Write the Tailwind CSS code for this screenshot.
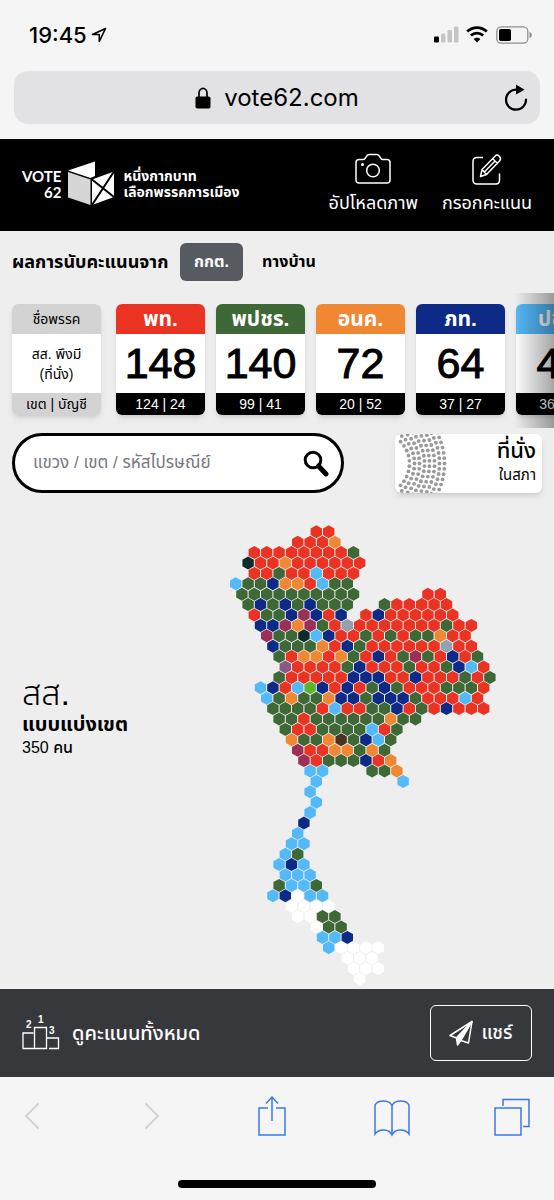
<!DOCTYPE html>
<html lang="th">

<head>
  <meta charset="UTF-8" />
  <meta name="viewport" content="width=device-width, initial-scale=1.0" />
  <title>Vote62</title>
  <script src="https://cdn.jsdelivr.net/npm/@tailwindcss/browser@4"></script>
</head>

<body class="min-h-screen flex flex-col bg-[#eeeeee] text-black overflow-x-hidden font-['Liberation_Sans','Noto_Sans_Thai',sans-serif]">

  <!-- Browser top -->
  <div class="bg-[#f5f5f5] pb-[15px] font-[Inter,sans-serif]">
    <div class="flex items-center justify-between h-[69px] pl-[29px] pr-[22px]">
      <div class="flex items-center gap-1">
        <span class="text-[22px] leading-7 font-medium">19:45</span>
        <svg class="w-4 h-4" viewBox="0 0 16 16" fill="none" stroke="#000" stroke-width="1.6" stroke-linejoin="round"><path d="M14.5 1.5 1.5 7.5H8.3V14.5Z" /></svg>
      </div>
      <div class="flex items-center gap-2">
        <svg class="w-[26px] h-[17px]" viewBox="0 0 26 17">
          <rect x="0" y="10.500" width="5" height="6" rx="1.200" />
          <rect x="7" y="7.500" width="4.500" height="9" rx="1.200" fill="#c5c5c5" />
          <rect x="13.500" y="4" width="4.500" height="12.500" rx="1.200" fill="#c5c5c5" />
          <rect x="20" y="0.500" width="4.500" height="16" rx="1.200" fill="#c5c5c5" />
        </svg>
        <svg class="w-[22px] h-[17px] -ml-[2px]" viewBox="0 0 22 17" fill="none" stroke="#000" stroke-width="2.800">
          <path d="M1.200 5.600C6.800.2 15.200.2 20.800 5.600M4.900 9.500c3.400-3.300 8.800-3.300 12.200 0" />
          <path d="M11 16.500 7.600 13c1.900-1.800 4.900-1.800 6.800 0Z" fill="#000" stroke="none" />
        </svg>
        <svg class="w-9 h-[18px]" viewBox="0 0 36 18">
          <rect x="0.800" y="0.800" width="31" height="16.400" rx="4.500" fill="none" stroke="#8e8e8e" stroke-width="1.300" />
          <rect x="3" y="3" width="12" height="12" rx="1.800" />
          <path d="M33.500 6v6c1.800-.5 2.200-1.700 2.200-3s-.4-2.500-2.200-3Z" fill="#8e8e8e" />
        </svg>
      </div>
    </div>
    <div class="relative flex items-center justify-center gap-[13px] h-[53px] mx-[14px] mt-[2px] rounded-[14px] bg-[#e2e2e4]">
      <svg class="w-4 h-[22px]" viewBox="0 0 16 22"><path d="M4 10V6a4 4.700 0 0 1 8 0v4" fill="none" stroke="#000" stroke-width="1.700" /><rect x="0.500" y="9.500" width="15" height="12" rx="1.800" /></svg>
      <span class="text-[24px] leading-8">vote62.com</span>
      <button type="button" aria-label="Reload" class="absolute right-3">
        <svg class="w-6 h-7" viewBox="0 0 24 28"><path d="M12.500 5.700A10 10 0 1 0 22 15.500" fill="none" stroke="#000" stroke-width="2.200" stroke-linecap="round" /><path d="M12 .5 20.500 5.800 12 10.500Z" /></svg>
      </button>
    </div>
  </div>

  <!-- Header -->
  <header class="flex items-center justify-between h-[92px] pl-[22px] pr-[22px] pb-[2px] bg-black text-white">
    <a href="#" class="flex items-center gap-[6px]">
      <span class="text-[15px] leading-4 font-bold text-right font-[Lato,sans-serif]">VOTE<br>62</span>
      <svg class="w-[50px] h-[48px]" viewBox="0 0 50 48">
        <path d="M1 10.500 28 1.500V16L23.500 18Z" fill="#fff" />
        <path d="M1 12 23.500 19.500V45L1 37.500Z" fill="#d6d6d6" />
        <path d="M25 19.500 47 11.500V37L25 45Z" fill="#fff" />
        <path d="M25 19.500 47 37M47 11.500 25 45" stroke="#000" stroke-width="2" />
      </svg>
      <span class="text-[14px] leading-4 font-bold whitespace-nowrap">หนึ่งกากบาท<br>เลือกพรรคการเมือง</span>
    </a>
    <nav class="flex gap-6 text-[18px] leading-6 whitespace-nowrap">
      <a href="#" class="flex flex-col items-center gap-[6px]">
        <svg class="w-9 h-8" viewBox="0 0 36 32" fill="none" stroke="#fff" stroke-width="1.500">
          <path d="M4 6.500H8.500C11 6.500 11 1.500 14 1.500H22C25 1.500 25 6.500 27.500 6.500H32Q35 6.500 35 9.500V27Q35 30 32 30H4Q1 30 1 27V9.500Q1 6.500 4 6.500Z" />
          <circle cx="18" cy="17.500" r="6.300" /><circle cx="7.500" cy="11.500" r="0.800" />
        </svg>
        <span>อัปโหลดภาพ</span>
      </a>
      <a href="#" class="flex flex-col items-center gap-[6px]">
        <svg class="w-8 h-8" viewBox="0 0 32 32" fill="none" stroke="#fff" stroke-width="1.500" stroke-linejoin="round">
          <path d="M12 4.500H6Q2 4.500 2 8.500V27Q2 31 6 31H25Q28.500 31 28.500 27V20.500" />
          <path d="M9.500 23.500 11 16.500 24 3.200Q26 1 28.300 3.200T28.500 8L15.500 21.500ZM21.500 5.500 26.300 10.300M11 16.500 15.500 21.500M24 8 13.300 19" />
        </svg>
        <span>กรอกคะแนน</span>
      </a>
    </nav>
  </header>

  <!-- Source of the count -->
  <div class="flex items-center gap-[7px] h-[38px] mt-3 pl-3 font-bold whitespace-nowrap">
    <h1 class="text-[18px] w-[161px]">ผลการนับคะแนนจาก</h1>
    <button type="button" class="w-[63px] h-[38px] rounded-md bg-[#585a61] text-white text-[16px]">กกต.</button>
    <button type="button" class="ml-3 text-[16px]">ทางบ้าน</button>
  </div>

  <!-- Party cards -->
  <div class="relative mt-3 h-[135px] pt-[11px] pl-3 overflow-hidden whitespace-nowrap text-center">
    <div class="flex gap-[11px]">
      <div class="shrink-0 w-[89px] mr-1 rounded-md overflow-hidden bg-white shadow-md">
        <div class="h-[30px] leading-[30px] text-[14px] bg-[#d3d3d3]">ชื่อพรรค</div>
        <div class="h-[59px] pt-[10px] text-[14px] leading-5">สส. พึงมี<br>(ที่นั่ง)</div>
        <div class="h-[22px] leading-[22px] text-[14px] bg-[#d3d3d3]">เขต | บัญชี</div>
      </div>
      <div class="shrink-0 w-[89px] rounded-md overflow-hidden bg-white shadow-md">
        <div class="h-[30px] leading-[30px] text-[21px] font-bold text-white bg-[#ea3323]">พท.</div>
        <div class="h-[59px] leading-[59px] text-[43px] [-webkit-text-stroke:1px_#000]">148</div>
        <div class="h-[22px] leading-[22px] text-[14px] text-white bg-black">124 | 24</div>
      </div>
      <div class="shrink-0 w-[89px] rounded-md overflow-hidden bg-white shadow-md">
        <div class="h-[30px] leading-[30px] text-[21px] font-bold text-white bg-[#3f6837]">พปชร.</div>
        <div class="h-[59px] leading-[59px] text-[43px] [-webkit-text-stroke:1px_#000]">140</div>
        <div class="h-[22px] leading-[22px] text-[14px] text-white bg-black">99 | 41</div>
      </div>
      <div class="shrink-0 w-[89px] rounded-md overflow-hidden bg-white shadow-md">
        <div class="h-[30px] leading-[30px] text-[21px] font-bold text-white bg-[#ef8733]">อนค.</div>
        <div class="h-[59px] leading-[59px] text-[43px] [-webkit-text-stroke:1px_#000]">72</div>
        <div class="h-[22px] leading-[22px] text-[14px] text-white bg-black">20 | 52</div>
      </div>
      <div class="shrink-0 w-[89px] rounded-md overflow-hidden bg-white shadow-md">
        <div class="h-[30px] leading-[30px] text-[21px] font-bold text-white bg-[#0e2a87]">ภท.</div>
        <div class="h-[59px] leading-[59px] text-[43px] [-webkit-text-stroke:1px_#000]">64</div>
        <div class="h-[22px] leading-[22px] text-[14px] text-white bg-black">37 | 27</div>
      </div>
      <div class="shrink-0 w-[89px] rounded-md overflow-hidden bg-white shadow-md">
        <div class="h-[30px] leading-[30px] text-[21px] font-bold text-white bg-[#54b9f9]">ปชป.</div>
        <div class="h-[59px] leading-[59px] text-[43px] [-webkit-text-stroke:1px_#000]">49</div>
        <div class="h-[22px] leading-[22px] text-[14px] text-white bg-black">36 | 13</div>
      </div>
    </div>
    <div class="absolute right-0 top-0 w-10 h-full bg-linear-to-r from-transparent to-black/35"></div>
  </div>

  <!-- Search -->
  <div class="flex items-center justify-between mt-[5px] pl-3 pr-3">
    <form class="flex items-center w-[332px] h-[60px] pl-[18px] pr-3 rounded-full border-3 border-black bg-white">
      <label for="area" class="sr-only">ค้นหาเขต</label>
      <input id="area" type="text" placeholder="แขวง / เขต / รหัสไปรษณีย์" class="grow min-w-0 h-10 text-[17px] outline-none placeholder:text-[#77777f]" />
      <button type="button" aria-label="ค้นหา">
        <svg class="w-[26px] h-[27px]" viewBox="0 0 26 27" fill="none" stroke="#000" stroke-linecap="round"><circle cx="10" cy="10" r="7.800" stroke-width="3" /><path d="M15.500 16 23 24" stroke-width="5" /></svg>
      </button>
    </form>
    <a href="#" class="flex items-center justify-between w-[147px] h-[59px] pr-[6px] rounded-md overflow-hidden bg-white shadow-md">
      <svg id="seats" class="w-[54px] h-[59px]" viewBox="0 0 54 59" fill="#999"></svg>
      <span class="text-right whitespace-nowrap text-[15px] leading-[22px]"><span class="text-[22px] font-medium">ที่นั่ง</span><br>ในสภา</span>
    </a>
  </div>

  <!-- Constituency map -->
  <main class="grow flex justify-between pl-[22px] pr-[50px]">
    <div class="pt-[182px] whitespace-nowrap">
      <p class="text-[34px] leading-[36px] font-light">สส.</p>
      <h2 class="text-[20px] leading-[26px] font-bold">แบบแบ่งเขต</h2>
      <p class="text-[16px] leading-[22px] font-medium">350 คน</p>
    </div>
    <svg id="map" class="w-[284px] h-[495px] shrink-0" viewBox="220 494 284 495"></svg>
  </main>

  <!-- Bottom bar -->
  <footer class="flex items-center justify-between h-[88px] pl-[22px] pr-[22px] bg-[#37383c] text-white">
    <a href="#" class="flex items-center gap-3 text-[20px] font-medium whitespace-nowrap">
      <svg class="w-[38px] h-9" viewBox="0 0 38 36">
        <path d="M11.500 18H1V33.500H24.500V12.500H12.500V33.500M24.500 23H36.500V33.500H27" fill="none" stroke="#fff" stroke-width="1.300" />
        <g fill="#fff" font-family="Liberation Sans" font-weight="bold" font-size="10"><text x="4" y="13">2</text><text x="16" y="8">1</text><text x="27" y="19">3</text></g>
      </svg>
      ดูคะแนนทั้งหมด
    </a>
    <button type="button" class="flex items-center justify-center gap-2 w-[102px] h-[56px] rounded-md border border-white text-[19px] font-medium">
      <svg class="w-6 h-[26px]" viewBox="0 0 24 26" fill="none" stroke="#fff" stroke-width="1.500" stroke-linejoin="round"><path d="M23 1.500 1 15.500 7.500 18 23 1.500 19.500 23 12 20.500" /><path d="M7.500 18 23 1.500 12 20 8.500 25Z" fill="#fff" /></svg>
      แชร์
    </button>
  </footer>

  <!-- Browser toolbar -->
  <div class="h-[123px] bg-[#f5f5f5] flex flex-col justify-between pt-[18px] pb-3">
    <div class="flex items-center justify-between pl-[14px] pr-[24px]">
      <button type="button" aria-label="Back" class="w-9 flex justify-center"><svg class="w-4 h-7" viewBox="0 0 16 28" fill="none" stroke="#d2d2d4" stroke-width="2"><path d="M14.500 1.500 2 14 14.500 26.500" /></svg></button>
      <button type="button" aria-label="Forward" class="w-9 flex justify-center"><svg class="w-4 h-7" viewBox="0 0 16 28" fill="none" stroke="#d2d2d4" stroke-width="2"><path d="M1.500 1.500 14 14 1.500 26.500" /></svg></button>
      <button type="button" aria-label="Share" class="w-9 flex justify-center"><svg class="w-[30px] h-[42px]" viewBox="0 0 28 42" fill="none" stroke="#3b78e7" stroke-width="1.500"><path d="M10 13H1V40H27V13H18M14 26V2M8 8.500 14 2 20 8.500" /></svg></button>
      <button type="button" aria-label="Bookmarks" class="w-9 flex justify-center"><svg class="w-9 h-[42px]" viewBox="0 0 36 42" fill="none" stroke="#3b78e7" stroke-width="1.500"><path d="M18 40V11C16 4.500 4 4.500 1 10V39C5 33.500 15 33.500 18 40C21 33.500 31 33.500 35 39V10C32 4.500 20 4.500 18 11" /></svg></button>
      <button type="button" aria-label="Tabs" class="w-9 flex justify-center"><svg class="w-9 h-[42px]" viewBox="0 0 36 42" fill="none" stroke="#3b78e7" stroke-width="1.500"><path d="M1 13H27V40H1ZM9 11V4.500H35V31.500H29" /></svg></button>
    </div>
    <div class="w-[198px] h-2 mx-auto rounded-full bg-black"></div>
  </div>

  <script>
    const colors = {
      R: "#ea3323", G: "#3f6837", N: "#0e2a87", O: "#ef8733", S: "#54b9f9", P: "#9b2f55",
      V: "#8a5a85", D: "#0d2b2b", A: "#94a0ad", L: "#59b52c", B: "#46341f", W: "#ffffff"
    };

    // [row, first column in half steps, one letter for each seat]
    const rows = [
      [0, 13, "RR"], [1, 10, "RRRO"], [2, 3, "RRRRRRRRG"], [3, 2, "DRRORRRRRR"], [4, 3, "RRGRRSRRR"],
      [5, 0, "SGGNOORSGG"], [6, 1, "GGGGGGGGGG"], [6, 31, "RR"], [7, 2, "GNGNGNGGG"], [7, 24, "GRRRRR"],
      [8, 3, "RGGNPNRN"], [8, 21, "RNRRRRRR"], [9, 4, "NNPOPGRARRRRRRRGRR"], [10, 5, "PGGDSNRRGRGRGGORR"],
      [11, 6, "NGGGORNGRRRRRRARR"], [12, 7, "GROOROGRNRGPGRNRG"], [13, 8, "VRRRRGNRRRGRRGNSR"],
      [14, 7, "GRRRRRNNNRRNRRRGRG"], [15, 4, "SNRSLNRNRGNGRRRGGGR"], [16, 5, "SGOGGONNGNNNGRRRSR"],
      [17, 6, "GGGGRSRRGGNRGRNRRR"], [18, 7, "GGRGGGGGGOGG"], [19, 8, "GRRGGGGSRG"], [20, 9, "OGGOBGNSG"],
      [21, 10, "PRROOGOG"], [22, 11, "PRGGGNRO"], [23, 12, "SS"], [23, 22, "GGO"], [24, 13, "S"], [24, 27, "S"],
      [25, 12, "S"], [26, 13, "S"], [27, 12, "S"], [28, 11, "N"], [29, 10, "S"], [30, 9, "SS"], [31, 8, "SG"],
      [32, 7, "SNS"], [33, 8, "SSS"], [34, 7, "GSSG"], [35, 6, "SNWSS"], [36, 9, "WWWW"], [37, 10, "WWGG"],
      [38, 13, "WGG"], [39, 14, "SSN"], [40, 15, "SWWWW"], [41, 18, "WWW"], [42, 19, "WWW"], [43, 20, "W"]
    ];

    let hexes = "";
    rows.forEach(([row, col, seats]) => {
      [...seats].forEach((seat, i) => {
        const x = 235.7 + (col + i * 2) * 6.2;
        const y = 532.8 + row * 10.4;
        hexes += `<path d="M${x} ${y - 6.5}l5.7 3.2v6.600l-5.7 3.2l-5.7-3.2v-6.600z" fill="${colors[seat]}"/>`;
      });
    });
    document.getElementById("map").innerHTML = hexes;

    // Seat arcs of the parliament
    let dots = "";
    for (let r = 31; r <= 66; r += 5) {
      const count = Math.round(r * 2.6 / 5.3);
      for (let k = 0; k <= count; k++) {
        const angle = -1.3 + 2.6 * k / count;
        const x = -16.5 + r * Math.cos(angle);
        const y = 29.5 + r * Math.sin(angle);
        if (x > 2) dots += `<circle cx="${x}" cy="${y}" r="1.900"/>`;
      }
    }
    document.getElementById("seats").innerHTML = dots;
  </script>

</body>

</html>
